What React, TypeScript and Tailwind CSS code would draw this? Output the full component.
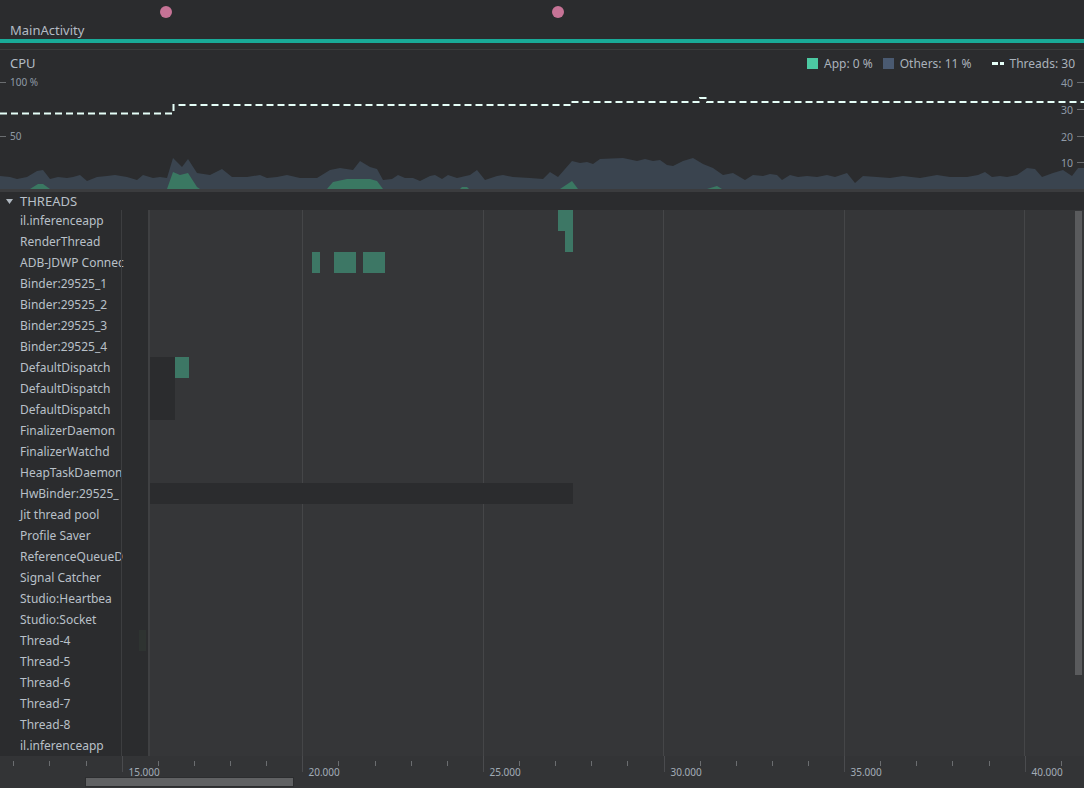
import React from "react";

const threads = [
  "il.inferenceapp",
  "RenderThread",
  "ADB-JDWP Connec",
  "Binder:29525_1",
  "Binder:29525_2",
  "Binder:29525_3",
  "Binder:29525_4",
  "DefaultDispatch",
  "DefaultDispatch",
  "DefaultDispatch",
  "FinalizerDaemon",
  "FinalizerWatchd",
  "HeapTaskDaemon",
  "HwBinder:29525_",
  "Jit thread pool",
  "Profile Saver",
  "ReferenceQueueD",
  "Signal Catcher",
  "Studio:Heartbea",
  "Studio:Socket",
  "Thread-4",
  "Thread-5",
  "Thread-6",
  "Thread-7",
  "Thread-8",
  "il.inferenceapp",
];

type Bar = { row: number; x: number; w: number; dark?: boolean };
const bars: Bar[] = [
  { row: 7, x: 0, w: 25, dark: true },
  { row: 8, x: 0, w: 25, dark: true },
  { row: 9, x: 0, w: 25, dark: true },
  { row: 13, x: 0, w: 423, dark: true },
  { row: 0, x: 408, w: 15 },
  { row: 1, x: 415, w: 8 },
  { row: 2, x: 162, w: 8 },
  { row: 2, x: 184, w: 22 },
  { row: 2, x: 213, w: 22 },
  { row: 7, x: 25, w: 14 },
];

const gridX = [152, 333, 513, 694, 874];

const others: [number, number][] = [
  [0, 176], [10, 177], [17, 179], [27, 177], [37, 171], [43, 170], [50, 179], [58, 177], [67, 178], [73, 177], [80, 175], [87, 181], [97, 177], [107, 176], [115, 175], [127, 177], [137, 180], [143, 175], [153, 178], [160, 177], [167, 178], [173, 158], [182, 167], [188, 159], [197, 173], [210, 175], [222, 169], [232, 177], [247, 177], [260, 175], [267, 178], [277, 177], [287, 175], [300, 178], [317, 178], [330, 170], [340, 168], [353, 170], [360, 161], [370, 167], [377, 169], [383, 180], [392, 179], [398, 175], [405, 178], [413, 178], [420, 181], [430, 176], [435, 175], [442, 179], [448, 175], [457, 178], [470, 175], [477, 170], [485, 180], [497, 176], [503, 175], [513, 177], [530, 178], [543, 179], [550, 172], [558, 177], [572, 161], [580, 163], [587, 162], [593, 164], [600, 159], [623, 158], [637, 161], [645, 159], [653, 161], [660, 160], [667, 165], [673, 166], [683, 161], [693, 158], [703, 164], [713, 168], [723, 175], [733, 173], [745, 180], [753, 175], [763, 176], [770, 174], [777, 175], [782, 180], [790, 175], [798, 177], [807, 176], [817, 177], [827, 175], [835, 177], [847, 173], [855, 183], [863, 176], [877, 177], [890, 178], [903, 176], [920, 178], [937, 175], [950, 177], [967, 177], [978, 175], [985, 172], [992, 177], [1000, 176], [1007, 177], [1017, 175], [1027, 168], [1035, 169], [1042, 177], [1053, 173], [1063, 170], [1072, 176], [1078, 168], [1084, 168],
];

const apps: [number, number][][] = [
  [[30, 189], [38, 184], [43, 184], [50, 189]],
  [[167, 189], [173, 172], [180, 175], [188, 173], [197, 187], [200, 189]],
  [[327, 189], [333, 182], [347, 179], [370, 179], [377, 181], [383, 189]],
  [[460, 189], [462, 187], [467, 187], [469, 189]],
  [[560, 189], [572, 181], [578, 189]],
  [[707, 189], [717, 186], [722, 189]],
];

const Y0 = 50;
const toPts = (p: [number, number][]) => p.map(([x, y]) => `${x},${y - Y0}`).join(" ");

function CpuChart() {
  const othersPts = `0,139 ${toPts(others)} 1084,139`;
  const axisText = "#8f9aa6";
  return (
    <svg className="absolute inset-0" width={1084} height={139} viewBox="0 0 1084 139">
      <polygon points={othersPts} fill="#3a444f" />
      {apps.map((a, i) => (
        <polygon key={i} points={toPts(a)} fill="#3a7862" />
      ))}
      <path
        d="M0 63.5 H173.5 V55 H571 V52 H700 V48 H707 V52 H1084"
        fill="none"
        stroke="#e6fff8"
        strokeWidth={2}
        strokeDasharray="7 4"
      />
      <line x1={0} y1={32.5} x2={6} y2={32.5} stroke="#6a6d70" />
      <line x1={0} y1={86.5} x2={6} y2={86.5} stroke="#6a6d70" />
      <text x={10} y={36} fontSize={10} fill={axisText} fontFamily="'Noto Sans', sans-serif">100 %</text>
      <text x={10} y={90} fontSize={10} fill={axisText} fontFamily="'Noto Sans', sans-serif">50</text>
      {[
        ["40", 32.5],
        ["30", 59.5],
        ["20", 86.5],
        ["10", 112.5],
      ].map(([t, y]) => (
        <g key={t as string}>
          <line x1={1077} y1={y as number} x2={1084} y2={y as number} stroke="#6a6d70" />
          <text
            x={1073}
            y={(y as number) + 4}
            fontSize={10.5}
            textAnchor="end"
            fill={axisText}
            fontFamily="'Noto Sans', sans-serif"
          >
            {t}
          </text>
        </g>
      ))}
    </svg>
  );
}

function AxisTicks() {
  const ticks: { x: number; major: boolean; label?: string }[] = [];
  const start = 121.7 - 3 * 36.12;
  for (let i = 0; i < 30; i++) {
    const x = start + i * 36.12;
    if (x > 1084) break;
    const major = (i - 3) % 5 === 0 && i >= 3;
    const label = major ? `${15 + ((i - 3) / 5) * 5}.000` : undefined;
    ticks.push({ x: Math.round(x) + 0.5, major, label });
  }
  return (
    <svg className="absolute inset-0" width={1084} height={32} viewBox="0 0 1084 32">
      {ticks.map((t, i) => (
        <g key={i}>
          <line x1={t.x} y1={t.major ? 0 : 5} x2={t.x} y2={t.major ? 16 : 10} stroke={t.major ? "#4a4b4e" : "#6b6d70"} />
          {t.label && (
            <text x={t.x + 6} y={20} fontSize={10} fill="#a2acb6" fontFamily="'Noto Sans', sans-serif">
              {t.label}
            </text>
          )}
        </g>
      ))}
    </svg>
  );
}

export default function App() {
  return (
    <div className="w-[1084px] h-[788px] overflow-hidden bg-[#2b2c2e] flex flex-col font-['Noto_Sans',sans-serif] text-[#b9c0c8]">
      {/* event bar */}
      <div className="relative h-[39px] flex flex-col justify-end pl-[10px] pb-px">
        <span className="absolute left-[160px] top-[6px] w-[12px] h-[12px] rounded-full bg-[#c67396]" />
        <span className="absolute left-[552px] top-[6px] w-[12px] h-[12px] rounded-full bg-[#c67396]" />
        <span className="text-[13px] leading-[16px] text-[#b3bbc4]">MainActivity</span>
      </div>
      <div className="h-[4px] bg-[#19aa98]" />
      <div className="h-[6px]" />
      <div className="h-px bg-[#3a3b3d]" />

      {/* CPU */}
      <div className="relative h-[139px]">
        <CpuChart />
        <div className="relative flex items-center h-[27px] pl-[10px] pr-[9px]">
          <span className="text-[13px] text-[#b3bbc4]">CPU</span>
          <div className="ml-auto flex items-center text-[12px] text-[#aab2bb]">
            <span className="w-[11px] h-[11px] bg-[#4cc9a2]" />
            <span className="ml-[6px]">App: 0 %</span>
            <span className="ml-[10px] w-[11px] h-[11px] bg-[#4a5a71]" />
            <span className="ml-[6px]">Others: 11 %</span>
            <svg className="ml-[20px]" width={12} height={3} viewBox="0 0 12 3">
              <rect x={0} y={0} width={6} height={3} fill="#e6fff8" />
              <rect x={8} y={0} width={4} height={3} fill="#e6fff8" />
            </svg>
            <span className="ml-[6px]">Threads: 30</span>
          </div>
        </div>
      </div>
      <div className="h-[3px] bg-[#3b3c3e]" />

      {/* THREADS header */}
      <div className="h-[18px] flex items-center">
        <svg className="ml-[6px]" width={7} height={5} viewBox="0 0 7 5">
          <polygon points="0,0 7,0 3.5,5" fill="#b0b8c0" />
        </svg>
        <span className="ml-[7px] text-[13px] leading-[18px] text-[#b9c0c8]">THREADS</span>
      </div>

      {/* threads body */}
      <div className="flex h-[546px]">
        <div className="w-[121px] flex flex-col">
          {threads.map((t, i) => (
            <div key={i} className="h-[21px] flex items-center pl-[20px] text-[12px] whitespace-nowrap">
              {t}
            </div>
          ))}
        </div>
        <div className="w-px bg-[#3d3e40]" />
        <div className="relative w-[26px]">
          <div className="absolute left-[17px] top-[420px] w-[7px] h-[21px] bg-[#2e3331]" />
        </div>
        <div className="w-[2px] bg-[#3f4042]" />
        <div className="relative flex-1 bg-[#353638]">
          {gridX.map((x) => (
            <div key={x} className="absolute top-0 bottom-0 w-px bg-[#454648]" style={{ left: x }} />
          ))}
          {bars.map((b, i) => (
            <div
              key={i}
              className={b.dark ? "absolute h-[21px] bg-[#2b2c2e]" : "absolute h-[21px] bg-[#3d7765]"}
              style={{ left: b.x, width: b.w, top: b.row * 21 }}
            />
          ))}
          <div className="absolute right-[2px] top-px w-[7px] h-[464px] bg-[#5a5b5d]" />
        </div>
      </div>

      {/* time axis */}
      <div className="relative h-[32px] bg-[#333436]">
        <AxisTicks />
        <div className="absolute left-[85px] top-[21px] w-[209px] h-[10px] bg-[#606163] border border-[#2c2d2f]" />
      </div>
    </div>
  );
}
